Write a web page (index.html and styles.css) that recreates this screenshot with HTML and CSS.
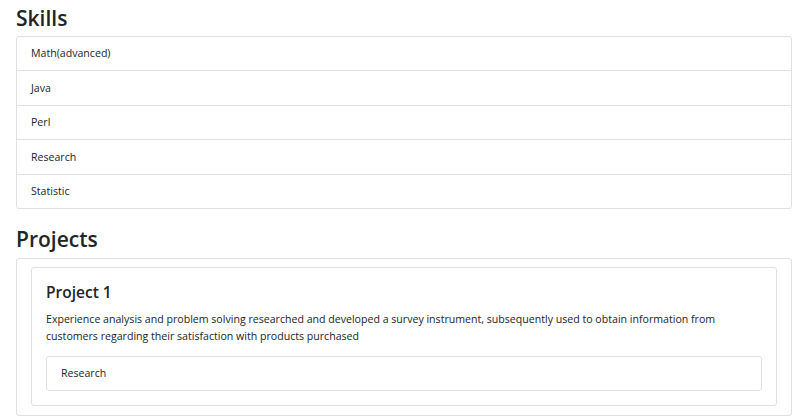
FILE: index.html
```html
<!DOCTYPE html>
<html lang="en">
<head>
    <meta charset="UTF-8">
    <meta name="viewport" content="width=device-width, initial-scale=1.0">
    <title>Resume</title>
    <link rel="stylesheet" href="styles.css">
</head>
<body>
    <div class="container">
        <section class="section">
            <h2>Skills</h2>
            <ul class="list-group">
                <li class="list-group-item">Math(advanced)</li>
                <li class="list-group-item">Java</li>
                <li class="list-group-item">Perl</li>
                <li class="list-group-item">Research</li>
                <li class="list-group-item">Statistic</li>
            </ul>
        </section>

        <section class="section">
            <h2>Projects</h2>
            <ul class="list-group">
                <li class="list-group-item">
                    <div class="card">
                        <div class="card-body">
                            <h4 class="card-title">Project 1</h4>
                            <p class="card-text">Experience analysis and problem solving researched and developed a survey instrument, subsequently used to obtain information from customers regarding their satisfaction with products purchased</p>
                            <ul class="list-group">
                                <li class="list-group-item">Research</li>
                            </ul>
                        </div>
                    </div>
                </li>
            </ul>
        </section>
    </div>
</body>
</html>
```

FILE: styles.css
```css
body {
    margin: 0;
    font-family: "Open Sans", "Noto Sans", Arial, sans-serif;
    font-size: 10.6px;
    line-height: 16.8px;
    color: #212529;
    background-color: #fff;
}
.container {
    padding: 4.5px 14px 0 16px;
}
.section {
    margin-bottom: 17.5px;
}
h2 {
    margin: 0 0 4.6px;
    font-size: 21px;
    font-weight: 600;
    line-height: 26.9px;
}
.list-group {
    list-style: none;
    margin: 0;
    padding: 0;
    border: 1px solid #e0e0e0;
    border-radius: 3px;
}
.list-group-item {
    padding: 8.4px 14px;
    line-height: 16.6px;
    border-top: 1px solid #e0e0e0;
}
.list-group-item:first-child {
    border-top: none;
}
.card {
    border: 1px solid #e0e0e0;
    border-radius: 3px;
    line-height: 16.8px;
}
.card-body {
    padding: 14px;
}
.card-title {
    margin: 0 0 8.4px;
    font-size: 15.5px;
    font-weight: 600;
    line-height: 20.2px;
}
.card-text {
    margin: 0 0 11.2px;
}
.card-body .list-group-item {
    line-height: 16.8px;
}
```
